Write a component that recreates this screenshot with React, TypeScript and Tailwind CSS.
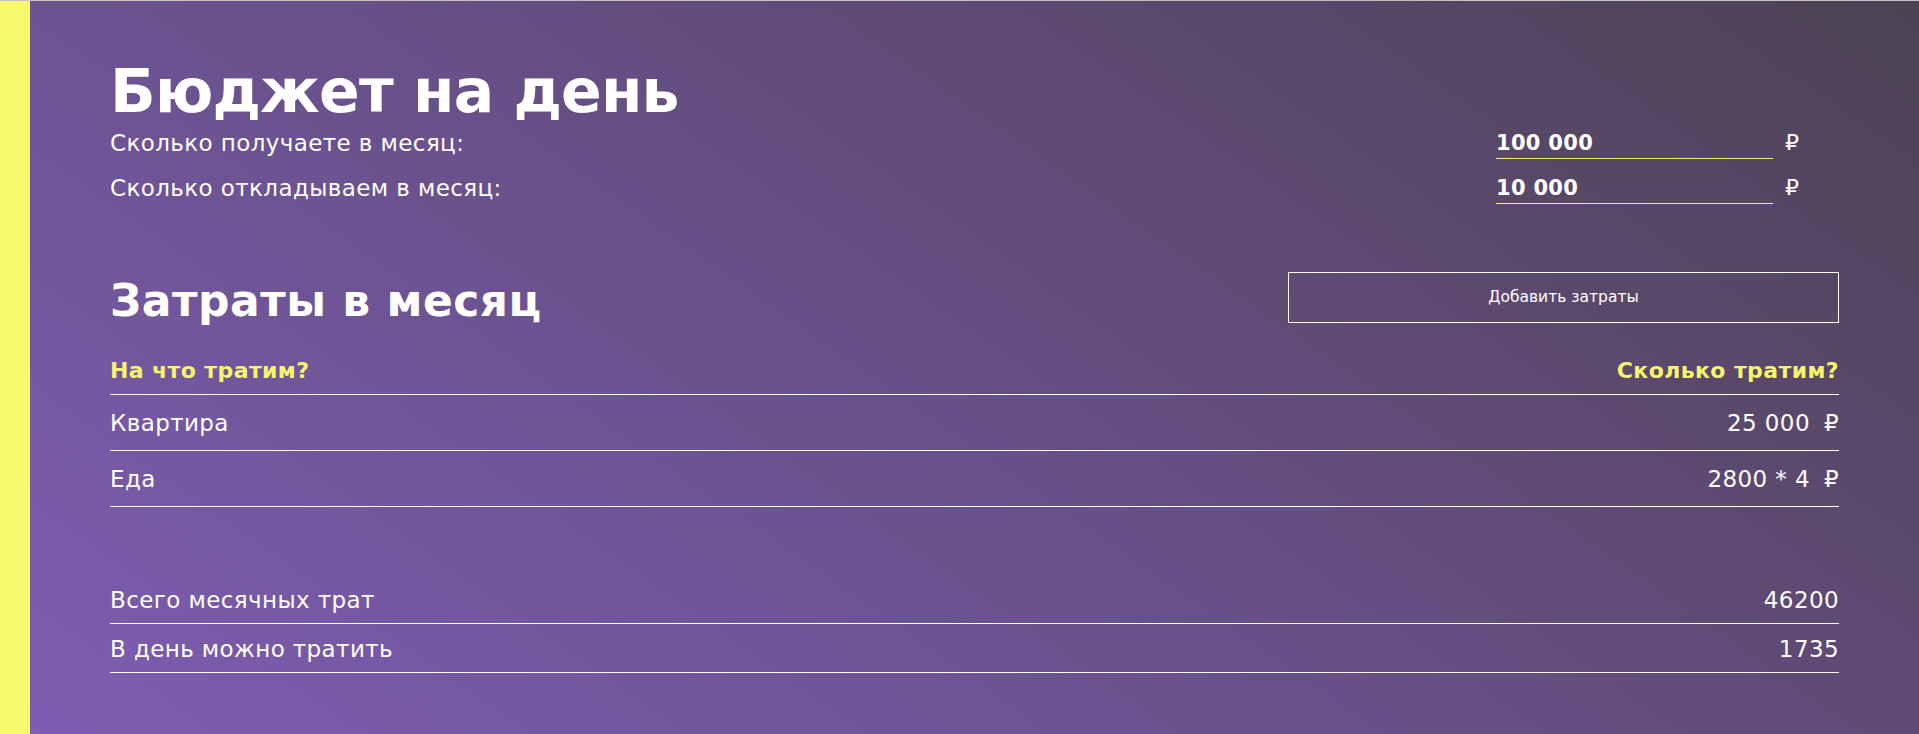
import React from "react";

const rows = [
  { name: "Квартира", value: "25 000" },
  { name: "Еда", value: "2800 * 4" },
];

export default function App() {
  return (
    <div className="flex h-[734px] w-full overflow-hidden border-t border-[#c2c2c2] font-['DejaVu_Sans',sans-serif] text-white">
      <div className="w-[30px] shrink-0 bg-[#f8f86e]" />
      <div className="flex flex-1 flex-col bg-[linear-gradient(35deg,#7e5db2_0%,#6c5392_36%,#5f4a74_66%,#4c4354_100%)] px-[80px]">
        <h1 className="mt-[60px] text-[60px] font-bold leading-none tracking-[-0.8px]">Бюджет на день</h1>

        <div className="mt-[7px] flex flex-col">
          {[
            { label: "Сколько получаете в месяц:", value: "100 000" },
            { label: "Сколько откладываем в месяц:", value: "10 000" },
          ].map((r) => (
            <div key={r.label} className="flex h-[45px] items-start justify-between">
              <span className="text-[23px] leading-[30px] tracking-[0.4px]">{r.label}</span>
              <div className="flex items-start pr-[40px]">
                <input
                  defaultValue={r.value}
                  className="h-[31px] w-[277px] border-b border-[#f2ee78] bg-transparent text-[21px] font-bold leading-[30px] tracking-[0.3px] text-white outline-none"
                />
                <span className="ml-[12px] text-[22px] leading-[30px]">₽</span>
              </div>
            </div>
          ))}
        </div>

        <div className="mt-[54px] flex h-[51px] items-start justify-between">
          <h2 className="mt-[7px] text-[44px] font-bold leading-none tracking-[0.5px]">Затраты в месяц</h2>
          <button className="h-[51px] w-[551px] border border-white text-[15.5px] text-white">
            Добавить затраты
          </button>
        </div>

        <div className="flex h-[72px] items-end justify-between border-b border-white pb-[8px] text-[22px] font-bold leading-[30px] tracking-[0.4px] text-[#f6f36c]">
          <span>На что тратим?</span>
          <span>Сколько тратим?</span>
        </div>

        {rows.map((r) => (
          <div
            key={r.name}
            className="flex h-[56px] items-end justify-between border-b border-white pb-[12px] text-[23px] leading-[30px] tracking-[0.4px]"
          >
            <span>{r.name}</span>
            <span className="flex gap-[14px]">
              <span>{r.value}</span>
              <span>₽</span>
            </span>
          </div>
        ))}

        <div className="mt-[68px] flex h-[49px] items-end justify-between border-b border-white pb-[8px] text-[23px] leading-[30px] tracking-[0.4px]">
          <span>Всего месячных трат</span>
          <span>46200</span>
        </div>
        <div className="flex h-[49px] items-end justify-between border-b border-white pb-[8px] text-[23px] leading-[30px] tracking-[0.4px]">
          <span>В день можно тратить</span>
          <span>1735</span>
        </div>
      </div>
    </div>
  );
}
